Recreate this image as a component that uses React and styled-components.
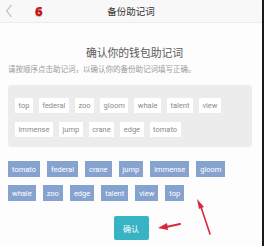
import React from "react";
import styled, { createGlobalStyle } from "styled-components";

const Global = createGlobalStyle`
  html, body { margin: 0; padding: 0; background: #fff; }
  body { font-family: Roboto, "Noto Sans CJK SC", sans-serif; }
`;

const Page = styled.div`
  position: relative;
  width: 262px;
  height: 246px;
  background: #fdfdfd;
  border-right: 2px solid #1a1a1a;
  overflow: hidden;
`;

const Header = styled.header`
  height: 23px;
  display: grid;
  grid-template-columns: 1fr auto 1fr;
  align-items: center;
  background: #f8f8f8;
  border-bottom: 1px solid #ececec;
  box-sizing: border-box;
`;

const HeaderLeft = styled.div`
  display: flex;
  align-items: center;
  padding-left: 5px;
  gap: 22px;
`;

const Step = styled.span`
  font-family: "Open Sans", Roboto, sans-serif;
  font-weight: 800;
  font-size: 13px;
  line-height: 1;
  color: #c8151b;
  text-shadow: 0 1px 1px rgba(0, 0, 0, 0.25);
`;

const Title = styled.h1`
  margin: 0;
  font-size: 9.5px;
  font-weight: 400;
  color: #333;
  font-family: "Noto Sans CJK SC", sans-serif;
`;

const Body = styled.main`
  padding: 0 10px 0 8px;
`;

const Heading = styled.h2`
  margin: 22px 0 0;
  padding-left: 9px;
  text-align: center;
  font-size: 10.8px;
  line-height: 14px;
  font-weight: 400;
  color: #5a5a5a;
  font-family: "Noto Sans CJK SC", sans-serif;
`;

const Hint = styled.p`
  margin: 5px 0 0;
  font-size: 7.5px;
  line-height: 10px;
  color: #9a9a9a;
  font-family: "Noto Sans CJK SC", sans-serif;
  white-space: nowrap;
`;

const WordBox = styled.div`
  margin-top: 11px;
  height: 62px;
  box-sizing: border-box;
  background: #ececec;
  border-radius: 3px;
  padding: 13px 7px 0;
  display: flex;
  flex-wrap: wrap;
  align-content: flex-start;
  column-gap: 6px;
  row-gap: 9px;
`;

const Chip = styled.span`
  height: 15px;
  padding: 0 ${(p) => (p.$picked ? "4px" : "3.5px")};
  display: inline-flex;
  align-items: center;
  font-size: 7.5px;
  font-family: Roboto, sans-serif;
  background: ${(p) => (p.$picked ? "#86a3cf" : "#ffffff")};
  color: ${(p) => (p.$picked ? "#ffffff" : "#8a8a8a")};
  box-sizing: border-box;
`;

const Picked = styled.div`
  margin-top: 14px;
  display: flex;
  flex-wrap: wrap;
  column-gap: 7px;
  row-gap: 8px;
  & > span { height: 16px; }
`;

const Actions = styled.div`
  display: flex;
  justify-content: center;
  margin-top: 15px;
  padding-left: 2px;
`;

const Confirm = styled.button`
  width: 35px;
  height: 24px;
  border: none;
  border-radius: 2px;
  background: #38b3c3;
  color: #fff;
  font-size: 8px;
  font-family: "Noto Sans CJK SC", sans-serif;
  padding: 0;
`;

const Arrows = styled.svg`
  position: absolute;
  left: 0;
  top: 0;
  pointer-events: none;
`;

const shuffled = ["top", "federal", "zoo", "gloom", "whale", "talent", "view", "immense", "jump", "crane", "edge", "tomato"];
const chosen = ["tomato", "federal", "crane", "jump", "immense", "gloom", "whale", "zoo", "edge", "talent", "view", "top"];

export default function App() {
  return (
    <>
      <Global />
      <Page>
        <Header>
          <HeaderLeft>
            <svg width="8" height="14" viewBox="0 0 8 14">
              <polyline points="6.5,1 1.5,7 6.5,13" fill="none" stroke="#c4c4c4" strokeWidth="1.2" />
            </svg>
            <Step>6</Step>
          </HeaderLeft>
          <Title>备份助记词</Title>
          <div />
        </Header>
        <Body>
          <Heading>确认你的钱包助记词</Heading>
          <Hint>请按顺序点击助记词，以确认你的备份助记词填写正确。</Hint>
          <WordBox>
            {shuffled.map((w) => (
              <Chip key={w}>{w}</Chip>
            ))}
          </WordBox>
          <Picked>
            {chosen.map((w) => (
              <Chip key={w} $picked>{w}</Chip>
            ))}
          </Picked>
          <Actions>
            <Confirm>确认</Confirm>
          </Actions>
        </Body>
        <Arrows width="262" height="246" viewBox="0 0 262 246">
          <path d="M210 234 L201 207" stroke="#d8283a" strokeWidth="1.6" fill="none" strokeLinecap="round" />
          <polygon points="197,199 204,207 199,209" fill="#d8283a" />
          <path d="M180 224 L166 227" stroke="#d8283a" strokeWidth="2" fill="none" strokeLinecap="round" />
          <polygon points="158,228 167,223 168,230" fill="#d8283a" />
        </Arrows>
      </Page>
    </>
  );
}
